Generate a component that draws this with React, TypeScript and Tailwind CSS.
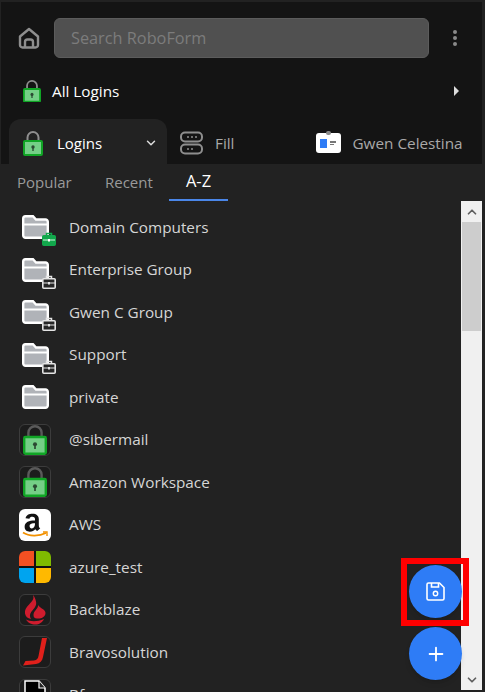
import type { ReactNode } from "react";
import { ChevronDown, ChevronUp, Plus } from "lucide-react";

function LockIcon({ w = 20, shackle = "#8f8f8f" }: { w?: number; shackle?: string }) {
  return (
    <svg width={w} height={w * 1.25} viewBox="0 0 20 25" className="shrink-0">
      <path d="M4.5 11V6.500a5.500 5.500 0 0 1 11 0V11" fill="none" stroke={shackle} strokeWidth="2" />
      <rect x="1" y="10" width="18" height="14" rx="1" fill="#75cf87" stroke="#10a525" strokeWidth="2" />
      <circle cx="10" cy="16" r="1.700" fill="#2c4a33" />
      <rect x="9.300" y="16.500" width="1.400" height="3.500" fill="#2c4a33" />
    </svg>
  );
}

function FolderIcon({ badge }: { badge?: "green" | "dark" }) {
  const green = badge === "green";
  return (
    <div className="relative w-[38px] h-[30px] shrink-0">
      <svg width="27" height="24" viewBox="0 0 27 24" className="absolute left-[3px] top-[3px]">
        <path
          d="M3.500 1.200h7.500l3 3.300h9.500a2.300 2.300 0 0 1 2.300 2.300v13.700a2.300 2.300 0 0 1-2.300 2.300h-20a2.300 2.300 0 0 1-2.300-2.300V3.500a2.300 2.300 0 0 1 2.300-2.300z"
          fill="#b0b3b8"
          stroke="#ffffff"
          strokeWidth="2.400"
        />
        <path d="M2 9.500h24" stroke="#ffffff" strokeWidth="2" />
      </svg>
      {badge && (
        <svg width="14" height="14" viewBox="0 0 14 14" className="absolute left-[23px] top-[20px]">
          <path d="M4.500 4V1.500h5V4" fill="none" stroke={green ? "#12a84c" : "#e4e4e4"} strokeWidth="1.500" />
          <rect
            x="0.800"
            y="3.800"
            width="12.400"
            height="9.400"
            rx="1"
            fill={green ? "#12a84c" : "#262626"}
            stroke={green ? "#12a84c" : "#e4e4e4"}
            strokeWidth="1.600"
          />
          <path d="M1 8h12" stroke={green ? "#d8f5e2" : "#e4e4e4"} strokeWidth="1" />
          <rect x="6" y="7" width="2" height="2.500" fill={green ? "#ffffff" : "#e4e4e4"} />
        </svg>
      )}
    </div>
  );
}

function Tile({ children, className }: { children: ReactNode; className: string }) {
  return (
    <div className={`w-[32px] h-[32px] shrink-0 rounded-md overflow-hidden flex items-center justify-center ${className}`}>
      {children}
    </div>
  );
}

const lockTile = (
  <Tile className="border border-[#3c3c3c] bg-[#1c1c1c]">
    <LockIcon w={24} shackle="#5a5a5a" />
  </Tile>
);

const rows: { name: string; icon: ReactNode }[] = [
  { name: "Domain Computers", icon: <FolderIcon badge="green" /> },
  { name: "Enterprise Group", icon: <FolderIcon badge="dark" /> },
  { name: "Gwen C Group", icon: <FolderIcon badge="dark" /> },
  { name: "Support", icon: <FolderIcon badge="dark" /> },
  { name: "private", icon: <FolderIcon /> },
  { name: "@sibermail", icon: lockTile },
  { name: "Amazon Workspace", icon: lockTile },
  {
    name: "AWS",
    icon: (
      <Tile className="bg-white">
        <svg width="32" height="32" viewBox="0 0 32 32" className="shrink-0">
          <path
            transform="translate(-4.500 -0.500) scale(1.300)"
            d="M14 4c-3 0-5 1-5.500 3.500l3 .4c.2-1 1-1.500 2.300-1.500 1.400 0 2 .7 2 2v.8c-4-.1-8 .9-8 4.800 0 2.500 1.700 3.800 4 3.800 1.900 0 3.100-.7 4.200-1.900.4.600.8 1 1.400 1.500l2.400-2c-.6-.6-1.100-1.100-1.100-2.300V8c0-2.500-2-4-4.700-4zm1.800 7.500c0 2-.9 3.800-2.500 3.800-1.100 0-1.700-.8-1.700-1.800 0-1.700 2-2.100 4.200-2.100z"
            fill="#111111"
          />
          <path d="M4 23.500c6 4 16 4 23 .5" fill="none" stroke="#f29100" strokeWidth="1.800" />
          <path d="M24 23h4v4" fill="none" stroke="#f29100" strokeWidth="1.400" />
        </svg>
      </Tile>
    ),
  },
  {
    name: "azure_test",
    icon: (
      <Tile className="bg-[#111111]">
        <div className="grid grid-cols-2 gap-[2px] w-full h-full">
          <div className="bg-[#f25022]" />
          <div className="bg-[#7fba00]" />
          <div className="bg-[#00a4ef]" />
          <div className="bg-[#ffb900]" />
        </div>
      </Tile>
    ),
  },
  {
    name: "Backblaze",
    icon: (
      <Tile className="border border-[#3c3c3c] bg-[#1c1c1c]">
        <svg width="32" height="32" viewBox="0 0 32 32" className="shrink-0" fill="#d01c2e">
          <path d="M14 1c1.500 4-1 6.500-3.500 9C7 13.500 5.500 16 6 19.500c.5 3 2.500 5 6 5.500-1.500-2.500-1.500-5 .5-7.500 2.500-3 5.500-5.500 4.500-10-.5-2.500-1.500-5-3-6.500z" />
          <path d="M19 11c.5 3.500-4 5.500-4.500 9.500-.2 2.500 1 4 3.500 4 4.500.5 8.500-2 8.500-5.500s-5-4.500-7.500-8z" />
          <path d="M7 25.500c4 2 11 2.500 18-.5-1.500 3.500-5 5.500-8.500 5.500-4 0-8-2-9.500-5z" />
        </svg>
      </Tile>
    ),
  },
  {
    name: "Bravosolution",
    icon: (
      <Tile className="border border-[#3c3c3c] bg-[#1c1c1c]">
        <svg width="32" height="32" viewBox="0 0 32 32" className="shrink-0">
          <path d="M23 2h5l-4 19c-.7 4-3 6.500-7 7l-13 1.500L6.500 25l8.500-.5c3-.5 4-2 4.500-4.500z" fill="#e0201b" />
        </svg>
      </Tile>
    ),
  },
  {
    name: "Bfax",
    icon: (
      <Tile className="border border-[#3c3c3c] bg-[#1c1c1c] items-start">
        <svg width="24" height="30" viewBox="0 0 24 30">
          <path d="M2 1h14l6 7v21H2z" fill="#000000" stroke="#ffffff" strokeWidth="1.500" />
          <path d="M16 1v7h6" fill="#222222" stroke="#ffffff" strokeWidth="1.200" />
        </svg>
      </Tile>
    ),
  },
];

export default function App() {
  return (
    <div
      className="relative w-[485px] h-[692px] overflow-hidden bg-[#222222] text-[15px] pt-[2px] pr-[3px] pl-px"
      style={{ fontFamily: '"Open Sans", "Noto Sans", sans-serif' }}
    >
      <div className="bg-[#141414]">
        <div className="flex items-center h-[71px] pl-[16px]">
          <svg width="24" height="24" viewBox="0 0 24 24" fill="none" stroke="#8e8e8e" strokeWidth="2.400" className="shrink-0">
            <path d="M3 10.500 12 3l9 7.500V19a2.500 2.500 0 0 1-2.500 2.500h-13A2.500 2.500 0 0 1 3 19z" strokeLinejoin="round" />
            <path d="M8 21.500V16a2.500 2.500 0 0 1 2.500-2.500h3A2.500 2.500 0 0 1 16 16v5.500" />
          </svg>
          <div className="ml-[13px] w-[375px] h-[40px] rounded-md bg-[#505050] border border-[#5c5c5c] flex items-center pl-[16px] pt-[2px] text-[#7c7c7c] text-[16.300px]">
            Search RoboForm
          </div>
          <div className="ml-[24px] flex flex-col gap-[2px]">
            <span className="w-[4px] h-[4px] rounded-full bg-[#8a8a8a]" />
            <span className="w-[4px] h-[4px] rounded-full bg-[#8a8a8a]" />
            <span className="w-[4px] h-[4px] rounded-full bg-[#8a8a8a]" />
          </div>
        </div>

        <div className="flex items-center h-[36px] pl-[22px] pr-[23px] text-white text-[15.300px]">
          <LockIcon w={18} />
          <span className="ml-[11px]">All Logins</span>
          <span className="ml-auto w-0 h-0 border-y-[5px] border-y-transparent border-l-[5px] border-l-[#dddddd]" />
        </div>

        <div className="flex items-end h-[55px] pl-[8px] text-[15.300px]">
          <div className="flex items-center w-[158px] h-[45px] pt-[3px] rounded-t-xl bg-[#222222] pl-[14px] pr-[9px] text-white">
            <LockIcon w={20} />
            <span className="ml-[14px] text-[15px]">Logins</span>
            <ChevronDown size={14} strokeWidth={2.500} className="ml-auto text-[#dddddd]" />
          </div>
          <div className="flex items-center h-[45px] pt-[3px] ml-[13px] text-[#a9a9a9]">
            <svg width="23" height="24" viewBox="0 0 23 24" fill="none" stroke="#8e8e8e" strokeWidth="2" className="shrink-0">
              <rect x="1" y="1.500" width="21" height="9" rx="4" />
              <rect x="1" y="13.500" width="21" height="9" rx="4" />
              <path d="M7 6h2M11 6h2M15 6h2M7 18h2M11 18h2" strokeWidth="1.500" />
            </svg>
            <span className="ml-[12px]">Fill</span>
          </div>
          <div className="flex items-center h-[45px] pt-[3px] ml-[82px] text-[#a9a9a9]">
            <div className="relative w-[25px] h-[20px] rounded-[3px] bg-white flex items-center gap-[3px] pl-[4px]">
              <span className="absolute -top-[2px] left-[10px] w-[5px] h-[4px] rounded-sm bg-[#8a8a8a]" />
              <span className="w-[7px] h-[9px] bg-[#2e7cf6]" />
              <span className="flex flex-col gap-[1px]">
                <span className="w-[6px] h-[1.500px] bg-[#777777]" />
                <span className="w-[4px] h-[1.500px] bg-[#777777]" />
              </span>
            </div>
            <span className="ml-[11px]">Gwen Celestina</span>
          </div>
        </div>
      </div>

      <div className="flex h-[37px] pl-[16px] text-[#9a9a9a]">
        <div className="flex items-center w-[88px]">Popular</div>
        <div className="flex items-center w-[64px]">Recent</div>
        <div className="flex items-center justify-center w-[59px] text-white text-[16.500px] border-b-2 border-[#4a86e8]">A-Z</div>
      </div>

      <div className="flex h-[489px]">
        <div className="flex-1 min-w-0 pl-[18px] pt-[5px] text-[15.300px]">
          {rows.map((row) => (
            <div key={row.name} className="flex items-center h-[42.500px] text-[#d6d6d6]">
              <div className="w-[50px] flex items-center">{row.icon}</div>
              <span>{row.name}</span>
            </div>
          ))}
        </div>
        <div className="w-[21px] shrink-0 bg-[#f0f0f0] flex flex-col">
          <div className="h-[21px] flex items-center justify-center">
            <ChevronUp size={14} strokeWidth={3} className="text-[#606060]" />
          </div>
          <div className="mx-px h-[109px] bg-[#cdcdcd]" />
          <div className="mt-auto h-[21px] flex items-center justify-center">
            <ChevronDown size={14} strokeWidth={3} className="text-[#606060]" />
          </div>
        </div>
      </div>

      <div className="absolute left-[401px] top-[558px] w-[68px] h-[68px] border-[6px] border-[#ff0000]" />
      <div className="absolute left-[409px] top-[565px] w-[53px] h-[53px] rounded-full bg-[#2e7cf6] flex items-center justify-center shadow-md">
        <svg width="19" height="19" viewBox="0 0 19 19" fill="none" stroke="#ffffff" strokeWidth="1.600">
          <path d="M2.500 1h11l4.500 4.500v11a1.500 1.500 0 0 1-1.500 1.500h-14A1.500 1.500 0 0 1 1 16.500v-14A1.500 1.500 0 0 1 2.500 1z" />
          <path d="M5.500 1v4h7V1" />
          <circle cx="9.500" cy="11.500" r="2.200" strokeWidth="1.400" />
        </svg>
      </div>
      <div className="absolute left-[409px] top-[627px] w-[53px] h-[53px] rounded-full bg-[#2e7cf6] flex items-center justify-center shadow-md">
        <Plus size={22} strokeWidth={2} className="text-white" />
      </div>
    </div>
  );
}
